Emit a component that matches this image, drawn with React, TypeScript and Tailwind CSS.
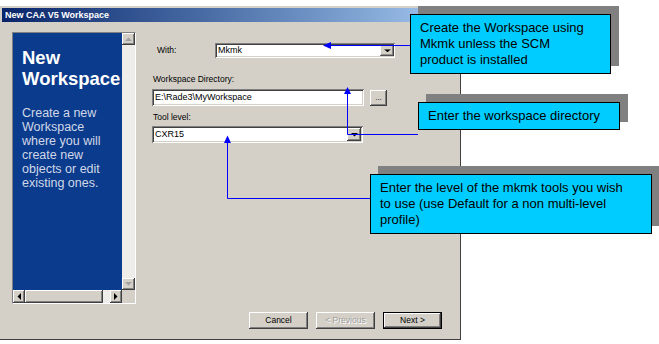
const raised =
  "shadow-[inset_-1px_-1px_0_#404040,inset_1px_1px_0_#ffffff,inset_-2px_-2px_0_#808080,inset_2px_2px_0_#d4d0c8]";
const sunken =
  "shadow-[inset_1px_1px_0_#808080,inset_-1px_-1px_0_#ffffff,inset_2px_2px_0_#404040,inset_-2px_-2px_0_#d4d0c8]";

type Dir = "up" | "down" | "left" | "right";

const Arrow = ({ dir, color }: { dir: Dir; color: string }) => {
  const pts = {
    up: "0,4 7,4 3.5,0.5",
    down: "0,0 7,0 3.5,3.5",
    left: "4,0 4,7 0.5,3.5",
    right: "0,0 0,7 3.5,3.5",
  }[dir];
  const vertical = dir === "up" || dir === "down";
  return (
    <svg width={vertical ? 7 : 4} height={vertical ? 4 : 7}>
      <polygon points={pts} fill={color} />
    </svg>
  );
};

const ScrollBtn = ({ dir, color, className }: { dir: Dir; color: string; className: string }) => (
  <div className={`flex items-center justify-center bg-[#d4d0c8] ${raised} ${className}`}>
    <Arrow dir={dir} color={color} />
  </div>
);

const DropBtn = () => (
  <div className={`flex items-center justify-center w-[14px] h-[13px] bg-[#d4d0c8] ${raised}`}>
    <Arrow dir="down" color="#000000" />
  </div>
);

const Button = ({ label, disabled, primary }: { label: string; disabled?: boolean; primary?: boolean }) => (
  <div className={`w-[59px] h-[17px] ${primary ? "border border-black" : ""}`}>
    <div
      className={`h-full flex items-center justify-center bg-[#d4d0c8] text-[8.5px] ${raised} ${
        disabled ? "text-[#a0a0a0] [text-shadow:1px_1px_0_#ffffff]" : "text-black"
      }`}
    >
      {label}
    </div>
  </div>
);

const Callout = ({ x, y, w, h, children }: { x: number; y: number; w: number; h: number; children: React.ReactNode }) => (
  <>
    <div className="absolute bg-[#808080]" style={{ left: x + 8, top: y - 8, width: w, height: h }} />
    <div
      className="absolute bg-[#00ccff] border border-black pl-[9px] pt-[5px] text-[13px] leading-[16px] text-black"
      style={{ left: x, top: y, width: w, height: h }}
    >
      {children}
    </div>
  </>
);

function Dialog() {
  return (
    <div className="mt-[6px] w-[461px] h-[334px] bg-[#d4d0c8] border-r border-b border-[#404040] pt-[2px] flex flex-col">
      <div className="mx-[2px] h-[14px] bg-linear-to-r from-[#0a246a] to-[#a6caf0] pl-[3px] text-[9px] leading-[14px] font-bold text-white">
        New CAA V5 Workspace
      </div>

      <div className="flex pt-[10px] pl-[12px]">
        {/* left info panel */}
        <div className="w-[124px] h-[272px] border border-t-[#808080] border-l-[#808080] border-b-white border-r-white flex flex-col">
          <div className="flex h-[257px]">
            <div className="w-[109px] bg-[#0b3b8c] pl-[9px] pt-[14px]">
              <div className="text-[18.5px] leading-[21px] font-bold text-white">
                New
                <br />
                Workspace
              </div>
              <div className="mt-[17px] text-[12.5px] leading-[14px] text-[#d0d8e8]">
                Create a new
                <br />
                Workspace
                <br />
                where you will
                <br />
                create new
                <br />
                objects or edit
                <br />
                existing ones.
              </div>
            </div>
            <div className="w-[13px] flex flex-col bg-[#eeede9]">
              <ScrollBtn dir="up" color="#a0a0a0" className="h-[12px]" />
              <div className="flex-1" />
              <ScrollBtn dir="down" color="#a0a0a0" className="h-[12px]" />
            </div>
          </div>
          <div className="flex h-[13px] bg-[#eeede9]">
            <ScrollBtn dir="left" color="#000000" className="w-[12px]" />
            <div className={`w-[78px] bg-[#d4d0c8] ${raised}`} />
            <div className="w-[7px]" />
            <ScrollBtn dir="right" color="#000000" className="w-[12px]" />
            <div className="w-[13px] bg-[#d4d0c8]" />
          </div>
        </div>

        {/* form */}
        <div className="ml-[16px] pt-[11px] text-black">
          <div className="flex items-center h-[15px]">
            <div className="ml-[5px] w-[58px] text-[8.5px]">With:</div>
            <div className={`w-[180px] h-[15px] bg-white flex items-center justify-between pl-[3px] pr-[1px] ${sunken}`}>
              <span className="text-[9px]">Mkmk</span>
              <div className="scale-y-[0.85]">
                <DropBtn />
              </div>
            </div>
          </div>

          <div className="mt-[15px] ml-[1px] text-[8.5px] leading-[13px]">Workspace Directory:</div>
          <div className="flex mt-[3px]">
            <div className={`w-[212px] h-[17px] bg-white flex items-center pl-[3px] text-[9px] ${sunken}`}>
              E:\Rade3\MyWorkspace
            </div>
            <div className={`ml-[6px] mt-[1px] w-[17px] h-[16px] bg-[#d4d0c8] flex items-center justify-center text-[8px] ${raised}`}>
              ...
            </div>
          </div>

          <div className="mt-[5px] ml-[1px] text-[8.5px] leading-[13px]">Tool level:</div>
          <div className={`mt-[2px] w-[211px] h-[17px] bg-white flex items-center justify-between pl-[3px] pr-[2px] ${sunken}`}>
            <span className="text-[9px]">CXR15</span>
            <DropBtn />
          </div>
        </div>
      </div>

      <div className="flex justify-end gap-[8px] pr-[18px] mt-[8px]">
        <Button label="Cancel" />
        <Button label="< Previous" disabled />
        <Button label="Next >" primary />
      </div>
    </div>
  );
}

export default function App() {
  return (
    <div className="relative w-[659px] h-[344px] overflow-hidden bg-white font-['Liberation_Sans',Arial,sans-serif]">
      <Dialog />

      <Callout x={410} y={14} w={201} h={60}>
        Create the Workspace using
        <br />
        Mkmk unless the SCM
        <br />
        product is installed
      </Callout>
      <Callout x={418} y={102} w={202} h={28}>
        Enter the workspace directory
      </Callout>
      <Callout x={370} y={174} w={282} h={60}>
        Enter the level of the mkmk tools you wish
        <br />
        to use (use Default for a non multi-level
        <br />
        profile)
      </Callout>

      <svg className="absolute left-0 top-0 pointer-events-none" width={659} height={344}>
        <g stroke="#0000ff" strokeWidth={1} fill="none">
          <polyline points="410,45.5 330,45.5" />
          <polyline points="418,134.5 347.5,134.5 347.5,93" />
          <polyline points="370,198.5 227.5,198.5 227.5,142" />
        </g>
        <g fill="#0000ff">
          <polygon points="323,45.5 331,42 331,49" />
          <polygon points="347.5,87 344,94 351,94" />
          <polygon points="227.5,135.5 224,143 231,143" />
        </g>
      </svg>
    </div>
  );
}
